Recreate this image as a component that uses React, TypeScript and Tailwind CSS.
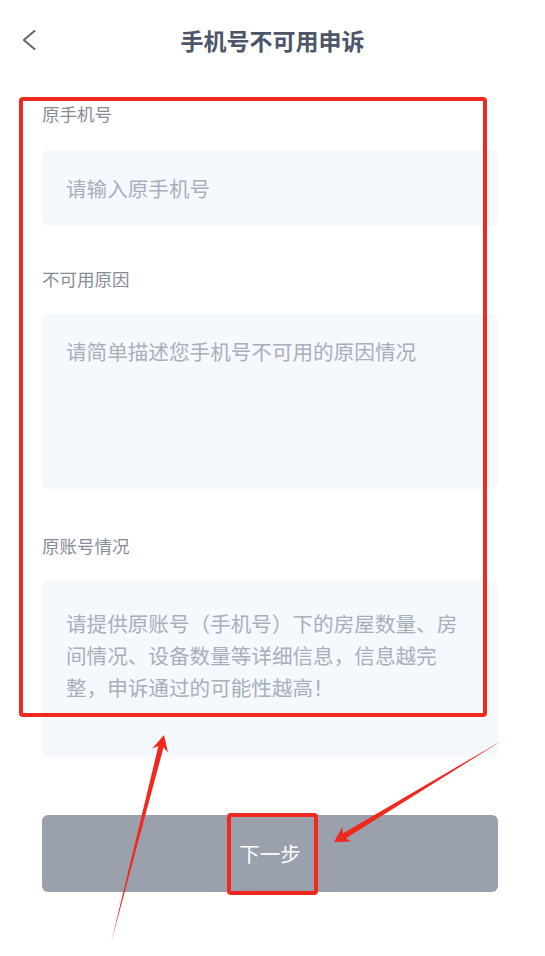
import React from 'react';

// 手机号不可用申诉 — 表单页（带红色标注）
const FONT = "font-['Noto_Sans_CJK_SC','Noto_Sans',sans-serif]";

function Chevron() {
  return (
    <svg width="14" height="20" viewBox="0 0 14 20" fill="none">
      <polyline points="12.5,1 1.8,10 12.5,19" stroke="#5d6575" strokeWidth="2" strokeLinecap="round" strokeLinejoin="round" />
    </svg>
  );
}

function Label({ children, className = '' }: { children: React.ReactNode; className?: string }) {
  return <p className={`text-[17.5px] leading-[24px] text-[#868c97] ${className}`}>{children}</p>;
}

export default function App() {
  return (
    <div className={`relative w-[545px] min-h-[956px] bg-white ${FONT}`}>
      {/* ── Header ── */}
      <header className="h-[80px] grid grid-cols-[1fr_auto_1fr] items-center">
        <div className="pl-[22px] flex items-center">
          <Chevron />
        </div>
        <h1 className="text-[23px] leading-[32px] font-semibold text-[#4d5568]">手机号不可用申诉</h1>
        <div />
      </header>

      {/* ── Form ── */}
      <main className="pl-[42px] pr-[47px] flex flex-col">
        <Label className="mt-[22px]">原手机号</Label>
        <div className="mt-[24px] h-[76px] rounded-[6px] bg-[#f5f8fd] px-6 flex items-center">
          <span className="text-[20.6px] text-[#a9afba]">请输入原手机号</span>
        </div>

        <Label className="mt-[41px]">不可用原因</Label>
        <div className="mt-[23px] h-[175px] rounded-[6px] bg-[#f5f8fd] pl-6 pt-[21px]">
          <p className="text-[20.6px] leading-[32px] text-[#a9afba]">请简单描述您手机号不可用的原因情况</p>
        </div>

        <Label className="mt-[45px]">原账号情况</Label>
        <div className="mt-[23px] h-[176px] rounded-[6px] bg-[#f5f8fd] pl-6 pt-[26px]">
          <p className="w-[400px] text-[20.6px] leading-[32px] text-[#a9afba]">
            请提供原账号（手机号）下的房屋数量、房间情况、设备数量等详细信息，信息越完整，申诉通过的可能性越高！
          </p>
        </div>

        <button className="mt-[58px] h-[77px] rounded-[6px] bg-[#9ba1ac] flex items-center justify-center text-[20.5px] text-white">
          下一步
        </button>
      </main>

      {/* ── 标注 ── */}
      <div className="absolute left-[19px] top-[97px] w-[468px] h-[620px] border-[4px] border-[#f0281d] rounded-[4px] pointer-events-none" />
      <div className="absolute left-[227px] top-[813px] w-[91px] h-[82px] border-[4px] border-[#f0281d] rounded-[4px] pointer-events-none" />
      <svg className="absolute left-0 top-0 pointer-events-none" width="545" height="956" viewBox="0 0 545 956">
        <polygon
          fill="#f0281d"
          points="111,943 163.6,747.2 168,752.5 164,735 152.2,748.5 158.4,746"
        />
        <polygon
          fill="#f0281d"
          points="503,740 345.9,838.2 351.2,841.5 334,842 342.4,826.9 342.7,833.4"
        />
      </svg>
    </div>
  );
}
